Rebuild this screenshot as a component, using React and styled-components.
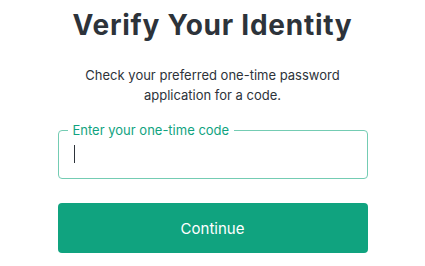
import React from "react";
import styled, { createGlobalStyle } from "styled-components";

const Global = createGlobalStyle`
  html, body {
    margin: 0;
    padding: 0;
    background: #ffffff;
  }
  body {
    font-family: Inter, "Noto Sans", "Liberation Sans", sans-serif;
    color: #2d333a;
  }
`;

const Page = styled.main`
  display: flex;
  flex-direction: column;
  align-items: center;
  width: 425px;
  padding-top: 5px;
`;

const Title = styled.h1`
  margin: 0;
  font-size: 28px;
  font-weight: 700;
  line-height: 40px;
  color: #2d333a;
  letter-spacing: 0.75px;
`;

const Subtitle = styled.p`
  margin: 20px 0 0;
  width: 310px;
  text-align: center;
  font-size: 13px;
  line-height: 20px;
  color: #2d333a;
`;

const Form = styled.form`
  display: flex;
  flex-direction: column;
  width: 310px;
  margin-top: 18px;
  gap: 24px;
`;

const Field = styled.fieldset`
  margin: 0;
  padding: 0 14px;
  height: 56px;
  box-sizing: border-box;
  border: 1px solid #74ccb3;
  border-radius: 4px;
`;

const Legend = styled.legend`
  padding: 0 5px;
  margin-left: -5px;
  font-size: 13px;
  line-height: 14px;
  color: #10a37f;
`;

const InputWrap = styled.div`
  position: relative;
  height: 36px;
`;

const Input = styled.input`
  width: 100%;
  height: 100%;
  border: none;
  outline: none;
  padding: 0;
  font: inherit;
  font-size: 16px;
  background: transparent;
  caret-color: transparent;
`;

const Caret = styled.span`
  position: absolute;
  left: 1px;
  top: 8px;
  width: 1px;
  height: 18px;
  background: #2d333a;
`;

const Button = styled.button`
  height: 50px;
  border: none;
  border-radius: 4px;
  background: #10a37f;
  color: #ffffff;
  font-family: inherit;
  font-size: 15px;
  cursor: pointer;
`;

export default function App() {
  return (
    <>
      <Global />
      <Page>
        <Title>Verify Your Identity</Title>
        <Subtitle>
          Check your preferred one-time password application for a code.
        </Subtitle>
        <Form onSubmit={(e) => e.preventDefault()}>
          <Field>
            <Legend>Enter your one-time code</Legend>
            <InputWrap>
              <Input type="text" inputMode="numeric" />
              <Caret />
            </InputWrap>
          </Field>
          <Button type="submit">Continue</Button>
        </Form>
      </Page>
    </>
  );
}
